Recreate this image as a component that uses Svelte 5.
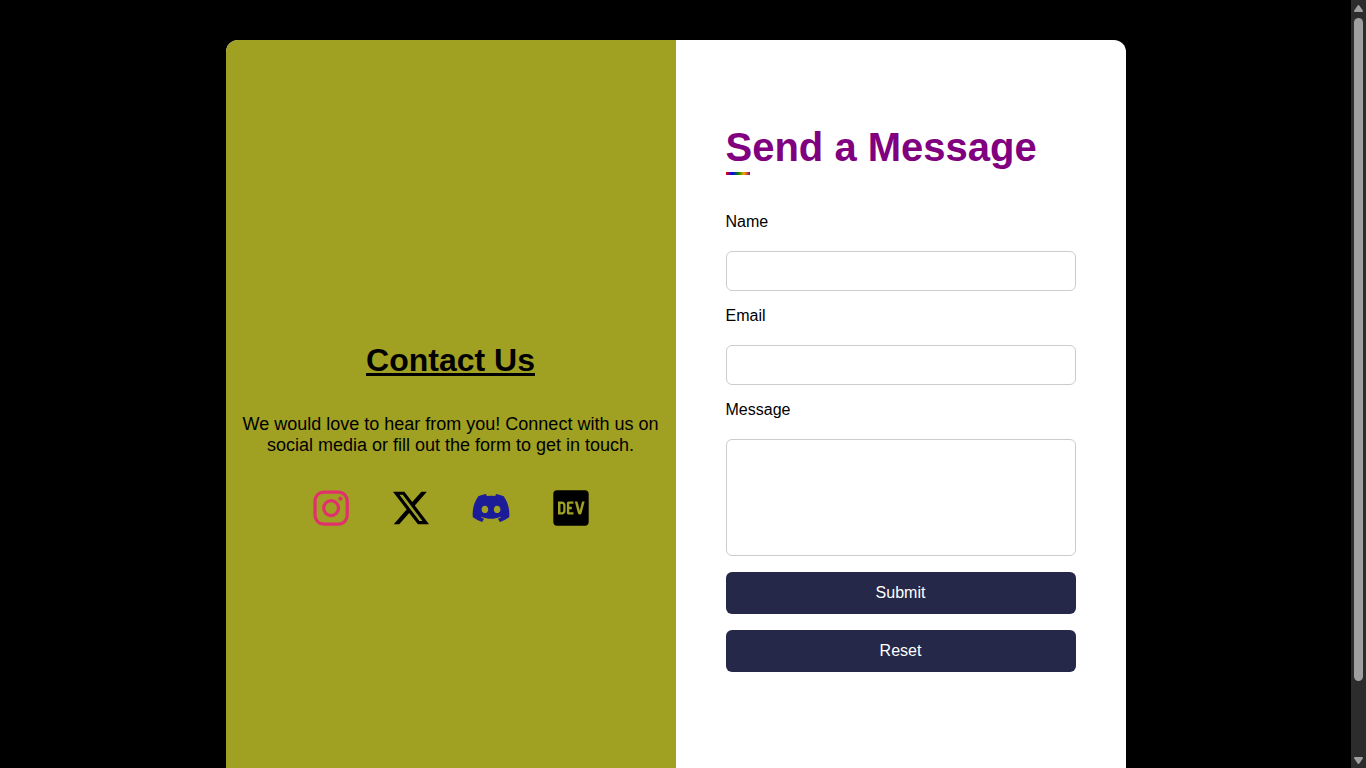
<script>
  let name = $state('');
  let email = $state('');
  let message = $state('');
</script>

<div class="shell">
  <main class="viewport">
    <div class="card">
      <section class="contact">
        <h2>Contact Us</h2>
        <p>We would love to hear from you! Connect with us on social media or fill out the form to get in touch.</p>
        <nav class="social" aria-label="Social media">
          <a class="instagram" href="#instagram" aria-label="Instagram">
            <svg viewBox="0 0 16 16" fill="none" stroke="currentColor" stroke-width="1.44">
              <rect x="0.9" y="0.9" width="14.3" height="14.3" rx="3.9" />
              <circle cx="8.05" cy="8.05" r="3.3" />
              <circle cx="12.2" cy="3.85" r="0.96" fill="currentColor" stroke="none" />
            </svg>
          </a>
          <a href="#x" aria-label="X">
            <svg viewBox="0 0 16 16" fill="currentColor">
              <path d="M12.6.75h2.454l-5.36 6.142L16 15.25h-4.937l-3.867-5.07-4.425 5.07H.316l5.733-6.57L0 .75h5.063l3.495 4.633L12.601.75Zm-.86 13.028h1.36L4.323 2.145H2.865z" />
            </svg>
          </a>
          <a class="discord" href="#discord" aria-label="Discord">
            <svg viewBox="0.15 0.15 15.7 15.7" fill="currentColor">
              <path d="M13.545 2.907a13.2 13.2 0 0 0-3.257-1.011.05.05 0 0 0-.052.025c-.141.25-.297.577-.406.833a12.2 12.2 0 0 0-3.658 0 8 8 0 0 0-.412-.833.05.05 0 0 0-.052-.025c-1.125.194-2.22.534-3.257 1.011a.04.04 0 0 0-.021.018C.356 6.024-.213 9.047.066 12.032q.003.022.021.037a13.3 13.3 0 0 0 3.995 2.02.05.05 0 0 0 .056-.019q.463-.63.818-1.329a.05.05 0 0 0-.01-.059l-.018-.011a9 9 0 0 1-1.248-.595.05.05 0 0 1-.02-.066l.015-.019q.127-.095.248-.195a.05.05 0 0 1 .051-.007c2.619 1.196 5.454 1.196 8.041 0a.05.05 0 0 1 .053.007q.121.1.248.195a.05.05 0 0 1-.004.085 8 8 0 0 1-1.249.594.05.05 0 0 0-.03.03.05.05 0 0 0 .003.041c.24.465.515.909.817 1.329a.05.05 0 0 0 .056.019 13.2 13.2 0 0 0 4.001-2.02.05.05 0 0 0 .021-.037c.334-3.451-.559-6.449-2.366-9.106a.03.03 0 0 0-.02-.019m-8.198 7.307c-.789 0-1.438-.724-1.438-1.612s.637-1.613 1.438-1.613c.807 0 1.45.73 1.438 1.613 0 .888-.637 1.612-1.438 1.612m5.316 0c-.788 0-1.438-.724-1.438-1.612s.637-1.613 1.438-1.613c.807 0 1.451.73 1.438 1.613 0 .888-.631 1.612-1.438 1.612" />
            </svg>
          </a>
          <a href="#dev" aria-label="DEV">
            <svg viewBox="-4 28 456 456" fill="currentColor">
              <path d="M120.12 208.29c-3.88-2.9-7.77-4.35-11.65-4.35H91.03v104.47h17.45c3.88 0 7.77-1.45 11.65-4.35 3.88-2.9 5.82-7.25 5.82-13.06v-69.65c-.01-5.8-1.96-10.16-5.83-13.06zM404.1 32H43.9C19.7 32 .06 51.59 0 75.8v360.4C.06 460.41 19.7 480 43.9 480h360.2c24.21 0 43.84-19.59 43.9-43.8V75.8c-.06-24.21-19.7-43.8-43.9-43.8zM154.2 291.19c0 18.81-11.61 47.31-48.36 47.25h-46.4V172.98h47.38c35.44 0 47.36 28.46 47.37 47.28l.01 70.93zm100.68-88.66H201.6v38.42h32.57v29.57H201.6v38.41h53.29v29.57h-62.18c-11.16.29-20.44-8.53-20.72-19.69V193.7c-.27-11.15 8.56-20.41 19.71-20.69h63.19l-.01 29.52zm103.64 115.29c-13.2 30.75-36.85 24.63-47.44 0l-38.53-144.8h32.57l29.71 113.72 29.57-113.72h32.58l-38.46 144.8z" />
            </svg>
          </a>
        </nav>
      </section>

      <section class="message">
        <h1>Send a Message</h1>
        <form onsubmit={(event) => event.preventDefault()}>
          <label for="name">Name</label>
          <input id="name" type="text" bind:value={name} />
          <label for="email">Email</label>
          <input id="email" type="email" bind:value={email} />
          <label for="message">Message</label>
          <textarea id="message" bind:value={message}></textarea>
          <button type="submit">Submit</button>
          <button type="reset">Reset</button>
        </form>
      </section>
    </div>
  </main>

  <div class="scrollbar" aria-hidden="true">
    <svg viewBox="0 0 15 18"><path d="M7.5 6 11 11H4Z" /></svg>
    <div class="track"><div class="thumb"></div></div>
    <svg viewBox="0 0 15 18"><path d="M4 8H11L7.5 13Z" /></svg>
  </div>
</div>

<style>
  * {
    box-sizing: border-box;
  }

  :global(body) {
    margin: 0;
    background: #000;
  }

  .shell {
    display: flex;
    height: 100vh;
    background: #000;
    color: #000;
    font-family: "Liberation Sans", Arial, sans-serif;
    font-size: 16px;
  }

  .viewport {
    flex: 1;
    min-width: 0;
    padding: 40px 0;
    overflow-y: auto;
    scrollbar-width: none;
  }

  .card {
    display: grid;
    grid-template-columns: 1fr 1fr;
    width: 100%;
    max-width: 900px;
    margin: 0 auto;
    border-radius: 12px;
    overflow: hidden;
    background: #fff;
  }

  .contact {
    display: flex;
    flex-direction: column;
    align-items: center;
    justify-content: center;
    padding: 16px;
    background: #a0a023;
    text-align: center;
  }

  h2 {
    margin: 0 0 36px;
    font-size: 32px;
    line-height: 36px;
    text-decoration: underline;
  }

  p {
    margin: 0 0 34px;
    font-size: 18px;
    line-height: 21px;
  }

  .social {
    display: flex;
    gap: 44px;
  }

  .social a {
    display: block;
    color: #000;
  }

  .social svg {
    display: block;
    width: 36px;
    height: 36px;
    overflow: visible;
  }

  .social .instagram {
    color: #e1306c;
  }

  .social .discord {
    color: #1c1c98;
  }

  .message {
    padding: 84px 50px 156px;
  }

  h1 {
    margin: 0 0 38px;
    color: purple;
    font-size: 40px;
    line-height: 46px;
  }

  h1::after {
    content: "";
    display: block;
    width: 24px;
    height: 3px;
    margin-top: 2px;
    background: linear-gradient(to right, red, blue, green, orange, purple);
  }

  form {
    display: flex;
    flex-direction: column;
  }

  label {
    margin-bottom: 20px;
    line-height: 18px;
  }

  input,
  textarea {
    display: block;
    width: 100%;
    height: 40px;
    margin: 0 0 16px;
    padding: 10px;
    border: 1px solid #ccc;
    border-radius: 6px;
    background: #fff;
    font: inherit;
  }

  textarea {
    height: 117px;
    resize: none;
  }

  button {
    height: 42px;
    margin: 0 0 16px;
    padding: 0;
    border: 0;
    border-radius: 6px;
    background: #252849;
    color: #fff;
    font: inherit;
    cursor: pointer;
  }

  button:last-child {
    margin-bottom: 0;
  }

  .scrollbar {
    display: flex;
    flex-direction: column;
    width: 15px;
    background: #2c2c2c;
  }

  .scrollbar svg {
    width: 15px;
    height: 18px;
    fill: #9f9f9f;
    stroke: #9f9f9f;
    stroke-width: 2;
    stroke-linejoin: round;
  }

  .track {
    flex: 1;
    padding: 0 3px;
  }

  .thumb {
    height: 90.6%;
    border-radius: 5px;
    background: #9f9f9f;
  }
</style>
